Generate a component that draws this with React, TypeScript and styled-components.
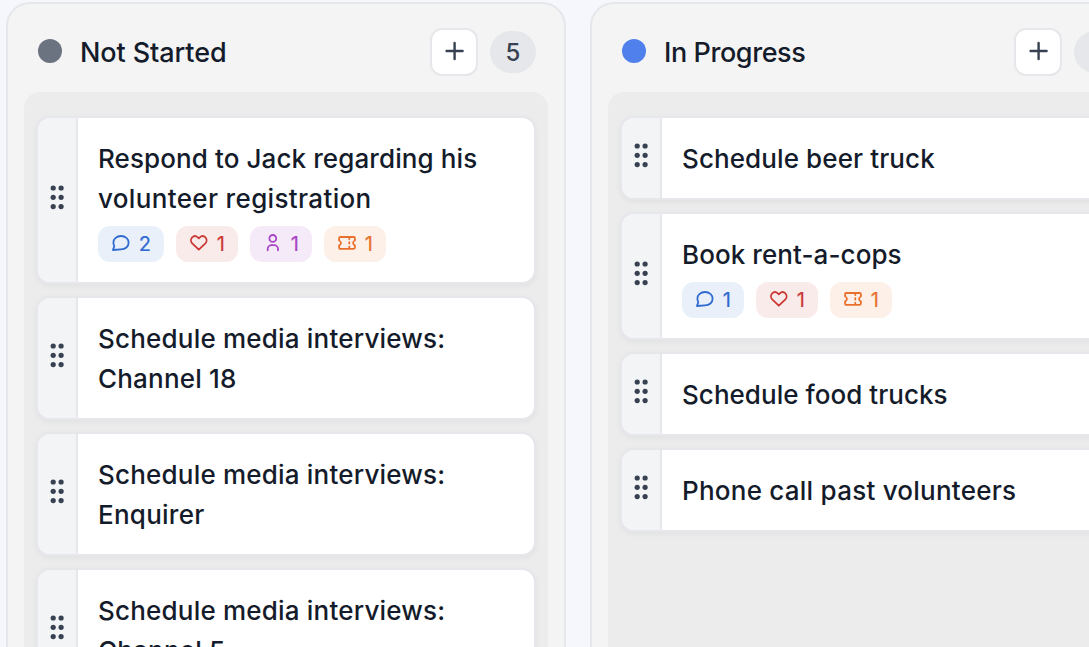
import React from "react";
import styled, { createGlobalStyle } from "styled-components";

const GlobalStyle = createGlobalStyle`
  *, *::before, *::after { box-sizing: border-box; }
  html, body { margin: 0; overflow: hidden; background: #f5f7fc; }
  body { font-family: Inter, "Liberation Sans", sans-serif; color: #141b2a; }
`;

const Board = styled.main`
  display: flex;
  align-items: stretch;
  gap: 24px;
  width: 100vw;
  height: 100vh;
  padding: 2px 0 0 6px;
  overflow: hidden;
`;

const Column = styled.section`
  display: flex;
  flex-direction: column;
  flex: none;
  width: 560px;
  height: 900px;
  padding: 0 16px 16px;
  border: 2px solid #e5e7eb;
  border-radius: 24px;
  background: #f4f4f4;
`;

const ColumnHeader = styled.header`
  display: flex;
  align-items: center;
  flex: none;
  height: 88px;
  padding: 8px 12px 0 14px;
`;

const StatusDot = styled.span<{ $color: string }>`
  flex: none;
  width: 24px;
  height: 24px;
  margin: -2px 18px 0 0;
  border-radius: 50%;
  background: ${(p) => p.$color};
`;

const ColumnTitle = styled.h2<{ $tracking: number }>`
  flex: 1;
  margin: 0;
  padding-top: 2px;
  font-size: 27px;
  font-weight: 500;
  line-height: 40px;
  letter-spacing: ${(p) => p.$tracking}px;
  white-space: nowrap;
`;

const AddButton = styled.button`
  display: flex;
  align-items: center;
  justify-content: center;
  width: 48px;
  height: 48px;
  margin: 0 12px 0 0;
  padding: 0 0 2px;
  border: 2px solid #e5e7eb;
  border-radius: 12px;
  background: #fff;
  color: #374151;
`;

const Count = styled.span`
  display: flex;
  align-items: center;
  justify-content: center;
  width: 46px;
  height: 42px;
  border-radius: 21px;
  background: #e5e7eb;
  color: #374151;
  font-size: 24px;
  font-weight: 500;
`;

const CardList = styled.div`
  display: flex;
  flex-direction: column;
  flex: 1;
  gap: 12px;
  padding: 24px 12px;
  border-radius: 16px;
  background: #ececec;
`;

const Card = styled.article`
  display: flex;
  flex: none;
  border: 2px solid #e5e7eb;
  border-radius: 14px;
  background: #fff;
  box-shadow: 0 2px 6px rgba(0, 0, 0, 0.05);
  overflow: hidden;
`;

const Handle = styled.div`
  display: flex;
  align-items: center;
  justify-content: center;
  flex: none;
  width: 40px;
  padding-bottom: 6px;
  border-right: 2px solid #e5e7eb;
  background: #f3f4f6;
  color: #374151;
`;

const CardBody = styled.div`
  flex: 1;
  padding: 21px 20px 19px;
`;

const CardLine = styled.div<{ $tracking: number }>`
  height: 40px;
  font-size: 26px;
  font-weight: 500;
  line-height: 40px;
  letter-spacing: ${(p) => p.$tracking}px;
  white-space: nowrap;
`;

const Chips = styled.div`
  display: flex;
  gap: 12px;
  margin: 7px 0 1px;
`;

const Chip = styled.span<{ $ink: string; $fill: string; $wide: boolean }>`
  display: flex;
  align-items: center;
  justify-content: space-between;
  width: ${(p) => (p.$wide ? 66 : 62)}px;
  height: 36px;
  padding: 0 13px 0 12px;
  border-radius: 12px;
  background: ${(p) => p.$fill};
  color: ${(p) => p.$ink};
  font-size: 20px;
  font-weight: 400;
  -webkit-text-stroke: 0.2px currentColor;

  svg { margin-top: -2px; }
`;

type ChipKind = "comment" | "heart" | "person" | "ticket";

const chipStyles: Record<ChipKind, { ink: string; fill: string }> = {
  comment: { ink: "#2f6bd0", fill: "#e9f0fa" },
  heart: { ink: "#cb3a36", fill: "#faebeb" },
  person: { ink: "#a746c6", fill: "#f5eaf8" },
  ticket: { ink: "#e8702d", fill: "#fcf0e9" },
};

const chipPaths: Record<ChipKind, React.ReactNode> = {
  comment: <path d="M2.9 18L4.3 14.1C3.7 12.9 3.4 11.9 3.4 10.7C3.4 6.9 6.7 4 11 4S18.6 6.9 18.6 10.7 15.3 17.4 11 17.4Z" />,
  heart: <path d="M10.8 17.7L4.2 11.3C2.6 9.6 2.6 7 4.2 5.3 5.8 3.7 8.1 3.7 9.8 5.3L10.8 6.3 11.8 5.3C13.5 3.7 15.8 3.7 17.4 5.3 19 7 19 9.6 17.4 11.3Z" />,
  person: (
    <>
      <circle cx="10.8" cy="6.4" r="3.4" />
      <path d="M5.7 18.3V17.1A3.9 3.9 0 0 1 9.6 13.2H12.1A3.9 3.9 0 0 1 16 17.1V18.3" />
    </>
  ),
  ticket: (
    <>
      <path d="M4.3 5H17.7Q18.9 5 18.9 6.2V8.5A2.5 2.5 0 0 0 18.9 13.3V15.6Q18.9 16.8 17.7 16.8H4.3Q3.1 16.8 3.1 15.6V13.3A2.5 2.5 0 0 0 3.1 8.5V6.2Q3.1 5 4.3 5Z" />
      <path d="M13.3 5.4V7M13.3 10.1V11.6M13.3 14.6V16.2" />
    </>
  ),
};

const ChipIcon = ({ kind }: { kind: ChipKind }) => (
  <svg width="22" height="22" viewBox="0 0 22 22" fill="none" stroke="currentColor" strokeWidth="1.8" strokeLinecap="round" strokeLinejoin="round">
    {chipPaths[kind]}
  </svg>
);

const GripIcon = () => (
  <svg width="14" height="26" viewBox="0 0 14 26" fill="currentColor">
    {[4, 13.3, 22.6].map((y) => (
      <React.Fragment key={y}>
        <circle cx="3.2" cy={y} r="2.6" />
        <circle cx="11.1" cy={y} r="2.6" />
      </React.Fragment>
    ))}
  </svg>
);

const PlusIcon = () => (
  <svg width="20" height="20" viewBox="0 0 20 20" fill="none" stroke="currentColor" strokeWidth="2.4" strokeLinecap="round">
    <path d="M10.6 2V18M2.6 10H18.6" />
  </svg>
);

interface Line { text: string; tracking: number }
interface Task { lines: Line[]; chips?: [ChipKind, number][] }
interface Group { title: string; tracking: number; color: string; count: number; tasks: Task[] }

const interviews: Line = { text: "Schedule media interviews:", tracking: 0.2 };

const groups: Group[] = [
  {
    title: "Not Started", tracking: -0.1, color: "#6b7280", count: 5,
    tasks: [
      {
        lines: [{ text: "Respond to Jack regarding his", tracking: 0.1 }, { text: "volunteer registration", tracking: 0.35 }],
        chips: [["comment", 2], ["heart", 1], ["person", 1], ["ticket", 1]],
      },
      { lines: [interviews, { text: "Channel 18", tracking: 0.2 }] },
      { lines: [interviews, { text: "Enquirer", tracking: 0.25 }] },
      { lines: [interviews, { text: "Channel 5", tracking: 0.2 }] },
    ],
  },
  {
    title: "In Progress", tracking: -0.42, color: "#4f80ec", count: 4,
    tasks: [
      { lines: [{ text: "Schedule beer truck", tracking: 0.1 }] },
      { lines: [{ text: "Book rent-a-cops", tracking: 0.08 }], chips: [["comment", 1], ["heart", 1], ["ticket", 1]] },
      { lines: [{ text: "Schedule food trucks", tracking: 0.04 }] },
      { lines: [{ text: "Phone call past volunteers", tracking: 0.24 }] },
    ],
  },
];

const TaskCard = ({ task }: { task: Task }) => (
  <Card>
    <Handle><GripIcon /></Handle>
    <CardBody>
      {task.lines.map((line) => (
        <CardLine key={line.text} $tracking={line.tracking}>{line.text}</CardLine>
      ))}
      {task.chips && (
        <Chips>
          {task.chips.map(([kind, value]) => (
            <Chip key={kind} $ink={chipStyles[kind].ink} $fill={chipStyles[kind].fill} $wide={value > 1}>
              <ChipIcon kind={kind} />
              {value}
            </Chip>
          ))}
        </Chips>
      )}
    </CardBody>
  </Card>
);

export default function App() {
  return (
    <>
      <GlobalStyle />
      <Board>
        {groups.map((group) => (
          <Column key={group.title}>
            <ColumnHeader>
              <StatusDot $color={group.color} />
              <ColumnTitle $tracking={group.tracking}>{group.title}</ColumnTitle>
              <AddButton aria-label="Add task"><PlusIcon /></AddButton>
              <Count>{group.count}</Count>
            </ColumnHeader>
            <CardList>
              {group.tasks.map((task, i) => <TaskCard key={i} task={task} />)}
            </CardList>
          </Column>
        ))}
      </Board>
    </>
  );
}
